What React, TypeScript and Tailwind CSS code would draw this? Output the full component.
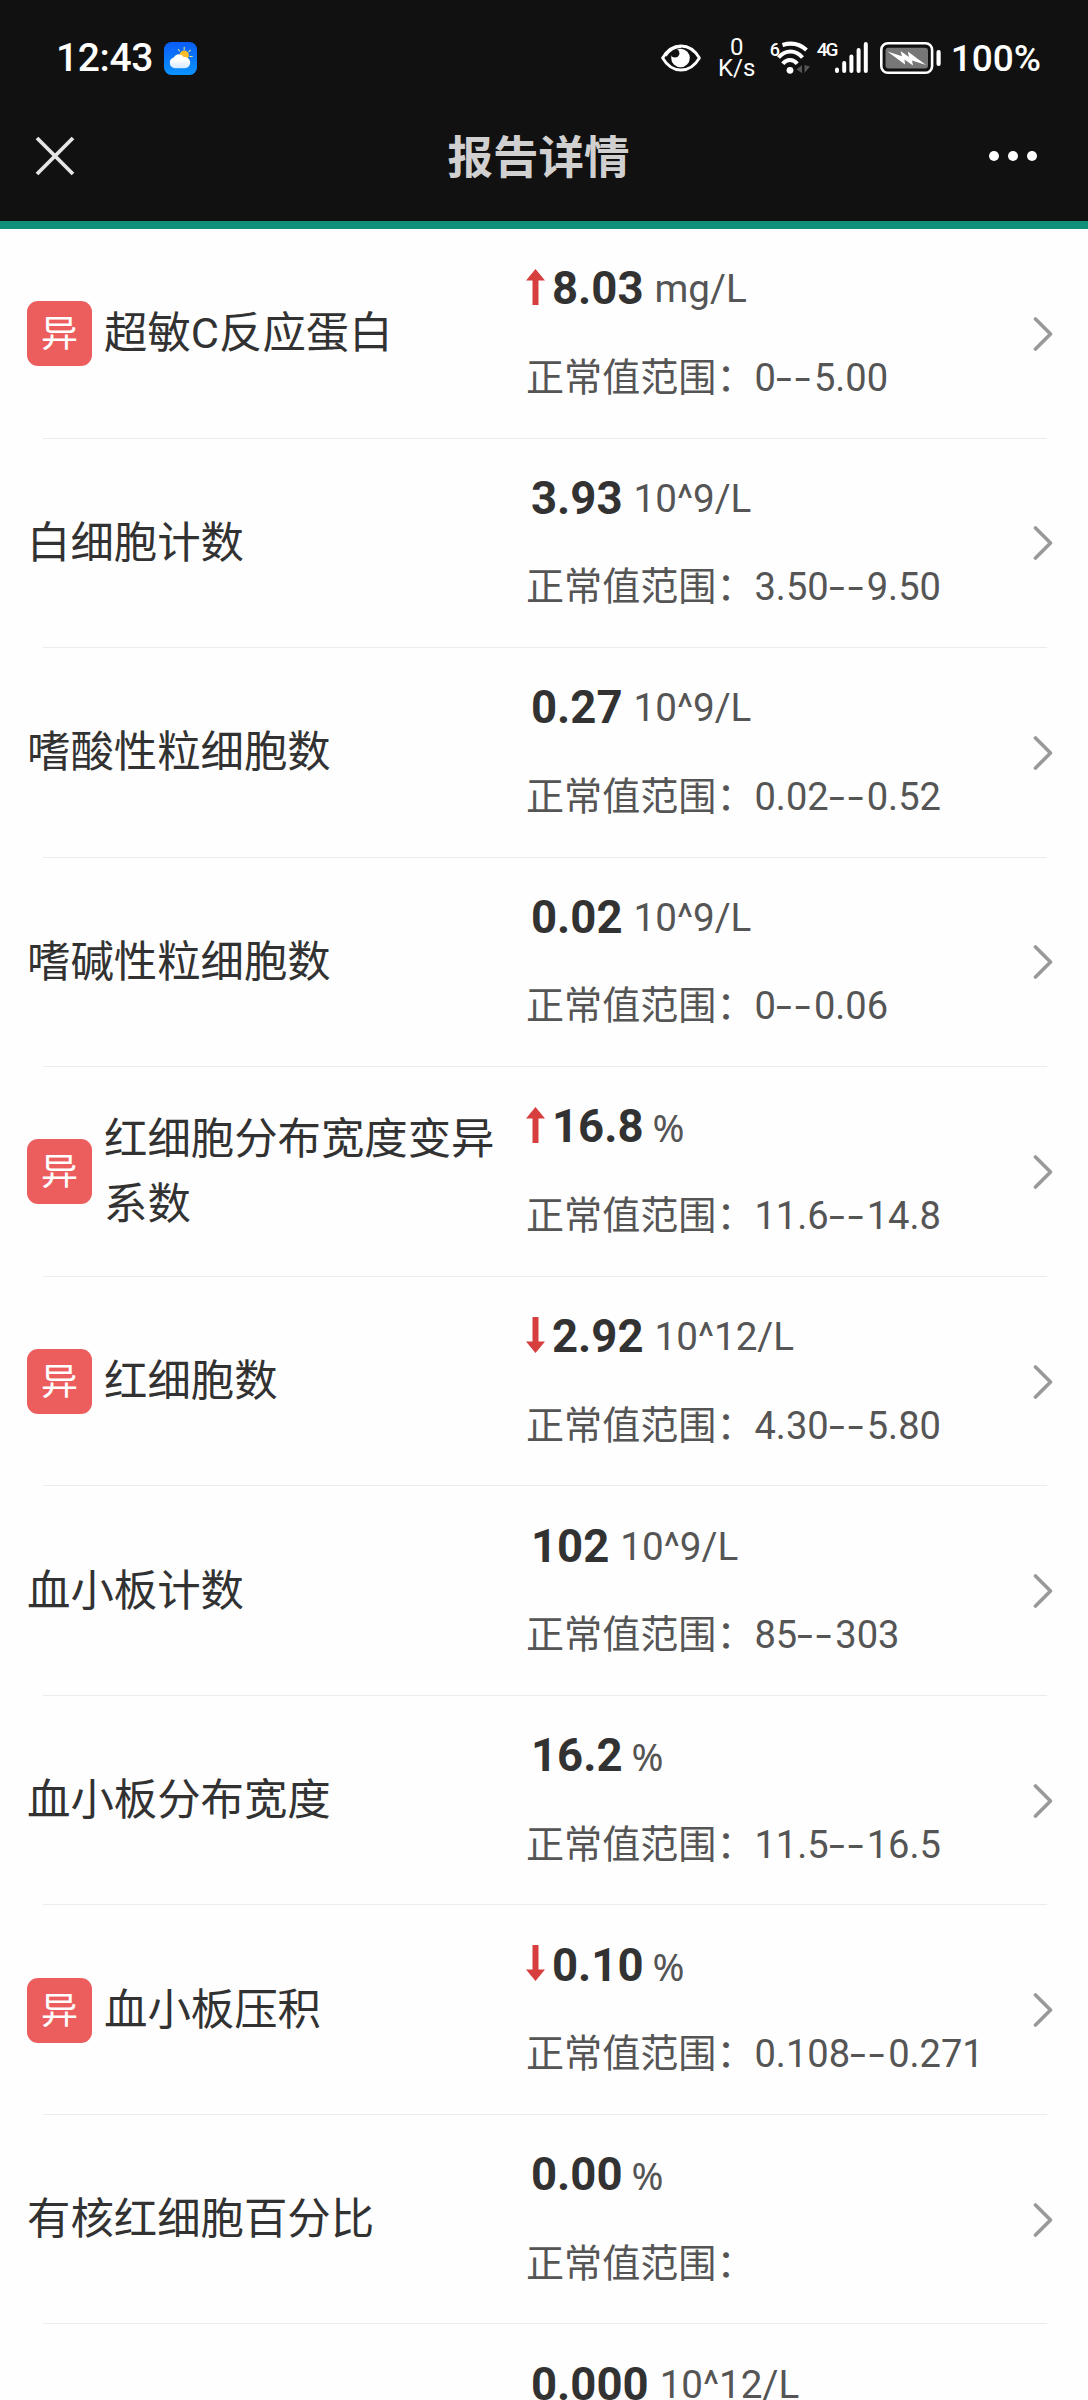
import { Fragment } from "react";

type Item = {
  name: string;
  value: string;
  unit: string;
  range: string;
  flag?: "up" | "down";
};

const items: Item[] = [
  { name: "超敏C反应蛋白", value: "8.03", unit: "mg/L", range: "0--5.00", flag: "up" },
  { name: "白细胞计数", value: "3.93", unit: "10^9/L", range: "3.50--9.50" },
  { name: "嗜酸性粒细胞数", value: "0.27", unit: "10^9/L", range: "0.02--0.52" },
  { name: "嗜碱性粒细胞数", value: "0.02", unit: "10^9/L", range: "0--0.06" },
  { name: "红细胞分布宽度变异系数", value: "16.8", unit: "%", range: "11.6--14.8", flag: "up" },
  { name: "红细胞数", value: "2.92", unit: "10^12/L", range: "4.30--5.80", flag: "down" },
  { name: "血小板计数", value: "102", unit: "10^9/L", range: "85--303" },
  { name: "血小板分布宽度", value: "16.2", unit: "%", range: "11.5--16.5" },
  { name: "血小板压积", value: "0.10", unit: "%", range: "0.108--0.271", flag: "down" },
  { name: "有核红细胞百分比", value: "0.00", unit: "%", range: "" },
  { name: "", value: "0.000", unit: "10^12/L", range: "" },
];

function WeatherIcon() {
  return (
    <svg className="ml-[11px] h-[33px] w-[33px]" viewBox="0 0 33 33">
      <defs>
        <linearGradient id="sky" x1="0" y1="0" x2="0" y2="1">
          <stop offset="0" stopColor="#0a5cf5" />
          <stop offset="1" stopColor="#0a94ff" />
        </linearGradient>
        <linearGradient id="cloud" x1="0" y1="0" x2="0" y2="1">
          <stop offset="0.4" stopColor="#ffffff" />
          <stop offset="1" stopColor="#d3e9ff" />
        </linearGradient>
      </defs>
      <rect width="33" height="33" rx="7.5" fill="url(#sky)" />
      <path
        d="M20.2 5.300v2.200M14.300 7.500l1.200 1.500M26.300 8.300l-1.400 1.400M26 14.500h2.200"
        stroke="#f0e08a"
        strokeWidth="1.100"
        strokeLinecap="round"
      />
      <circle cx="20.2" cy="13.200" r="4.700" fill="#f9bd2c" />
      <path
        d="M11 26.200a5.300 5.300 0 0 1-5.200-5.600c0-2.600 1.600-4.500 4-5 1.600-4.200 7.300-4.800 9.700-.6 3.600-.4 6.700 2 6.700 5.600 0 3.200-2.300 5.600-5.300 5.600z"
        fill="url(#cloud)"
      />
    </svg>
  );
}

function EyeIcon() {
  return (
    <svg className="h-[28px] w-[40px]" viewBox="0 0 40 28" fill="none">
      <path
        d="M1.600 14C6 6.500 12.500 2 20 2s14 4.500 18.400 12C34 21.500 27.500 26 20 26S6 21.500 1.600 14z"
        stroke="white"
        strokeWidth="2.800"
        strokeLinejoin="round"
      />
      <circle cx="19.500" cy="14" r="9.300" fill="white" />
      <circle cx="14" cy="9.200" r="4.400" fill="#111" />
      <path d="M5 12C9 6.500 14 3.400 20 3.400" stroke="white" strokeWidth="1.400" />
    </svg>
  );
}

function WifiIcon() {
  return (
    <svg className="h-[34px] w-[42px]" viewBox="0 0 42 34" fill="none">
      <g stroke="white" strokeWidth="4">
        <path d="M12.500 4C20.500 1.500 29.500 2.500 36.500 9" />
        <path d="M8.500 16.500c7-8 17-8 24 0" />
        <path d="M12.800 22.800c4-5 10.400-5 14.400 0" />
      </g>
      <circle cx="20" cy="29.300" r="3.400" fill="white" />
      <path d="M26.500 28.200l5.500-4v8zM34.500 24v8l5.500-6.500z" fill="#555" />
    </svg>
  );
}

function SignalIcon() {
  return (
    <svg className="h-[33px] w-[33px]" viewBox="0 0 33 33" stroke="white" strokeWidth="4" strokeLinecap="round">
      <path d="M2 27.500v1.500M9.200 21v8M16.400 14.500V29M23.600 8v21M30.800 2v27" />
    </svg>
  );
}

function BatteryIcon() {
  return (
    <svg className="h-[32px] w-[61px]" viewBox="0 0 61 32" fill="none">
      <rect x="1.300" y="1.300" width="50.800" height="29.400" rx="6.500" stroke="white" strokeWidth="2.600" />
      <rect x="5.500" y="5.800" width="42.500" height="20.800" rx="3" fill="#777" />
      <path d="M7.500 9.500l14.500 4.700-1.500-5.200 8.500 6-1.200-5.500L46 23l-14-4.500 1 5-8.500-6 .5 5z" fill="white" />
      <rect x="56.500" y="8" width="4.200" height="16" rx="2" fill="white" />
    </svg>
  );
}

function StatusBar() {
  return (
    <div className="flex h-[116px] items-center justify-between pr-[47px] pl-[56px]">
      <div className="flex items-center">
        <span className="text-[39px] leading-none font-medium tracking-[-0.4px]">12:43</span>
        <WeatherIcon />
      </div>
      <div className="flex items-center">
        <EyeIcon />
        <div className="ml-[18px] flex w-[36px] flex-col items-center text-[24px] leading-[21px]">
          <span>0</span>
          <span>K/s</span>
        </div>
        <div className="ml-[15px] flex items-start">
          <span className="-mr-[9px] w-[9px] text-[18px] leading-[18px] font-medium">6</span>
          <WifiIcon />
        </div>
        <div className="ml-[5px] flex items-start">
          <span className="w-[18px] text-[19px] leading-[16px] font-medium tracking-[-2px]">4G</span>
          <SignalIcon />
        </div>
        <div className="ml-[12px]">
          <BatteryIcon />
        </div>
        <span className="ml-[10px] text-[37px] leading-none font-medium">100%</span>
      </div>
    </div>
  );
}

function TitleBar() {
  return (
    <div className="flex h-[80px] items-center justify-between pr-[51px] pl-[35px]">
      <svg className="h-[40px] w-[40px]" viewBox="0 0 40 40" stroke="#e6e6e6" strokeWidth="3.800">
        <path d="M2 2l36 36M38 2L2 38" />
      </svg>
      <h1 className="pt-[6px] pl-[13px] text-[45.500px] leading-none font-bold text-[#d0d0d0]">报告详情</h1>
      <div className="flex gap-[9px]">
        <span className="size-[10px] rounded-full bg-white" />
        <span className="size-[10px] rounded-full bg-white" />
        <span className="size-[10px] rounded-full bg-white" />
      </div>
    </div>
  );
}

function Arrow({ flag }: { flag: "up" | "down" }) {
  return (
    <svg className="mr-[6px] mb-[5px] h-[36px] w-[20px]" viewBox="0 0 20 36" fill="#d63f3d">
      {flag === "up" ? (
        <path d="M9.500 0l9.500 11.500h-6.500V36h-6V11.500H0z" />
      ) : (
        <path d="M9.500 36l9.500-11.500h-6.500V0h-6v24.500H0z" />
      )}
    </svg>
  );
}

function Range({ range }: { range: string }) {
  return (
    <>
      {range.split("--").map((part, i) => (
        <Fragment key={i}>
          {i > 0 && (
            <span className="inline-block w-[38px]">
              <span className="inline-block origin-left scale-x-[1.500] tracking-[2px]">--</span>
            </span>
          )}
          {part}
        </Fragment>
      ))}
    </>
  );
}

function Row({ item }: { item: Item }) {
  return (
    <li className="relative flex h-[209.560px] shrink-0 items-center pr-[35px] pl-[27px]">
      <div className="flex w-[499px] items-center">
        {item.flag && (
          <span className="mr-[12px] flex size-[65px] shrink-0 items-center justify-center rounded-[11px] bg-[#ec5e5e] pt-[2px] text-[37px] leading-none text-white">
            异
          </span>
        )}
        <span className="text-[43.400px] leading-[65px] text-[#323232]">{item.name}</span>
      </div>
      <div className="flex flex-1 flex-col gap-[22px] text-[#555]">
        <div className="flex h-[66px] items-center pb-[1px]">
          {item.flag ? <Arrow flag={item.flag} /> : <span className="w-[5px]" />}
          <span className="text-[45.500px] leading-[66px] font-bold text-[#323232]">{item.value}</span>
          {item.unit === "%" ? (
            <span className="ml-[9px] font-['Noto_Sans'] text-[38.500px] leading-[66px]">%</span>
          ) : (
            <span className="ml-[11px] text-[38.600px] leading-[66px]">{item.unit}</span>
          )}
        </div>
        <p className="text-[38.100px] leading-[66px] whitespace-nowrap">
          正常值范围：
          <Range range={item.range} />
        </p>
      </div>
      <svg
        className="h-[36px] w-[20px]"
        viewBox="0 0 20 36"
        fill="none"
        stroke="#999"
        strokeWidth="3.600"
        strokeLinecap="round"
        strokeLinejoin="round"
      >
        <path d="M2.500 3l15 15-15 15" />
      </svg>
      <span className="absolute right-[41px] bottom-0 left-[43px] h-px bg-[#ececec]" />
    </li>
  );
}

export default function App() {
  return (
    <div className="flex h-[2400px] w-[1088px] flex-col overflow-hidden bg-[#fefefe] font-[Roboto,'Noto_Sans_CJK_SC',sans-serif]">
      <header className="h-[229px] shrink-0 border-b-[8px] border-[#0f9078] bg-[#111] text-white">
        <StatusBar />
        <TitleBar />
      </header>
      <ul className="flex flex-col">
        {items.map((item, i) => (
          <Row key={i} item={item} />
        ))}
      </ul>
    </div>
  );
}
